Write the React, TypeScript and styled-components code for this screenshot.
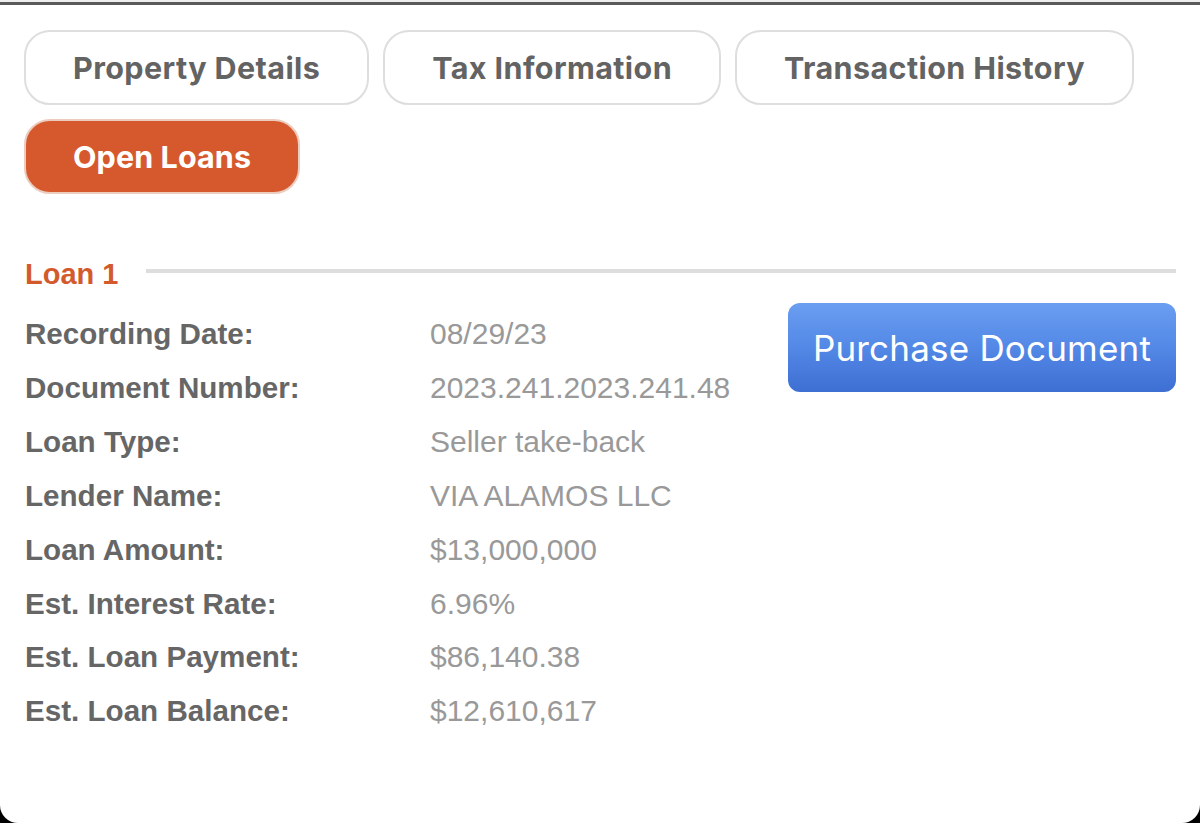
import React from "react";
import styled, { createGlobalStyle } from "styled-components";

const Global = createGlobalStyle`
  html, body { margin: 0; padding: 0; background: #000; }
  #root { min-height: 823px; }
`;

const Card = styled.div`
  background: #ffffff;
  min-height: 823px;
  box-sizing: border-box;
  border-bottom-left-radius: 18px;
  border-bottom-right-radius: 18px;
  overflow: hidden;
  display: flex;
  flex-direction: column;
`;

const TopStrip = styled.div`
  height: 2px;
  background: #eeeeee;
  border-bottom: 3px solid #5a5a5a;
`;

const Body = styled.div`
  padding: 25px 24px 0 24px;
  display: flex;
  flex-direction: column;
`;

const Tabs = styled.div`
  display: flex;
  flex-wrap: wrap;
  gap: 14px;
`;

const Tab = styled.button<{ $active?: boolean }>`
  height: 75px;
  box-sizing: border-box;
  padding: 0 47px;
  border-radius: 26px;
  border: 2px solid ${(p) => (p.$active ? "#ecccbf" : "#dedede")};
  background: ${(p) => (p.$active ? "#d6592d" : "#ffffff")};
  color: ${(p) => (p.$active ? "#ffffff" : "#636363")};
  font-family: Inter, "Liberation Sans", sans-serif;
  font-weight: 700;
  font-size: 30.5px;
  letter-spacing: ${(p) => (p.$active ? "0.1px" : "0.4px")};
  cursor: pointer;
`;

const Section = styled.div`
  margin-top: 63px;
  display: flex;
  flex-direction: column;
`;

const SectionHeader = styled.div`
  display: flex;
  align-items: center;
  gap: 28px;
  height: 34px;
  padding-left: 1px;
`;

const SectionTitle = styled.div`
  font-family: "Liberation Sans", Arial, sans-serif;
  font-weight: 700;
  font-size: 29px;
  line-height: 34px;
  color: #d35a2c;
  white-space: nowrap;
`;

const Rule = styled.div`
  flex: 1;
  height: 4px;
  background: #dddddd;
  margin-bottom: 6px;
`;

const Content = styled.div`
  margin-top: 12px;
  display: flex;
  justify-content: space-between;
  align-items: flex-start;
`;

const Fields = styled.div`
  margin-top: 4px;
  margin-left: 1px;
  display: grid;
  grid-template-columns: 405px auto;
  font-family: "Liberation Sans", Arial, sans-serif;
  line-height: 53.9px;
`;

const Label = styled.div`
  font-weight: 700;
  font-size: 29.6px;
  color: #666666;
`;

const Value = styled.div`
  font-size: 30px;
  color: #999999;
`;

const PurchaseButton = styled.button`
  width: 388px;
  height: 89px;
  border: none;
  border-radius: 12px;
  background: linear-gradient(180deg, #6a9ef1 0%, #5388e6 50%, #3e6fd3 100%);
  color: #ffffff;
  font-family: Inter, "Liberation Sans", sans-serif;
  font-weight: 400;
  font-size: 35px;
  letter-spacing: 0.2px;
  cursor: pointer;
`;

const rows: [string, string][] = [
  ["Recording Date:", "08/29/23"],
  ["Document Number:", "2023.241.2023.241.48"],
  ["Loan Type:", "Seller take-back"],
  ["Lender Name:", "VIA ALAMOS LLC"],
  ["Loan Amount:", "$13,000,000"],
  ["Est. Interest Rate:", "6.96%"],
  ["Est. Loan Payment:", "$86,140.38"],
  ["Est. Loan Balance:", "$12,610,617"],
];

export default function App() {
  return (
    <>
      <Global />
      <Card>
        <TopStrip />
        <Body>
          <Tabs>
            <Tab>Property Details</Tab>
            <Tab>Tax Information</Tab>
            <Tab>Transaction History</Tab>
            <Tab $active>Open Loans</Tab>
          </Tabs>
          <Section>
            <SectionHeader>
              <SectionTitle>Loan 1</SectionTitle>
              <Rule />
            </SectionHeader>
            <Content>
              <Fields>
                {rows.map(([l, v]) => (
                  <React.Fragment key={l}>
                    <Label>{l}</Label>
                    <Value>{v}</Value>
                  </React.Fragment>
                ))}
              </Fields>
              <PurchaseButton>Purchase Document</PurchaseButton>
            </Content>
          </Section>
        </Body>
      </Card>
    </>
  );
}
